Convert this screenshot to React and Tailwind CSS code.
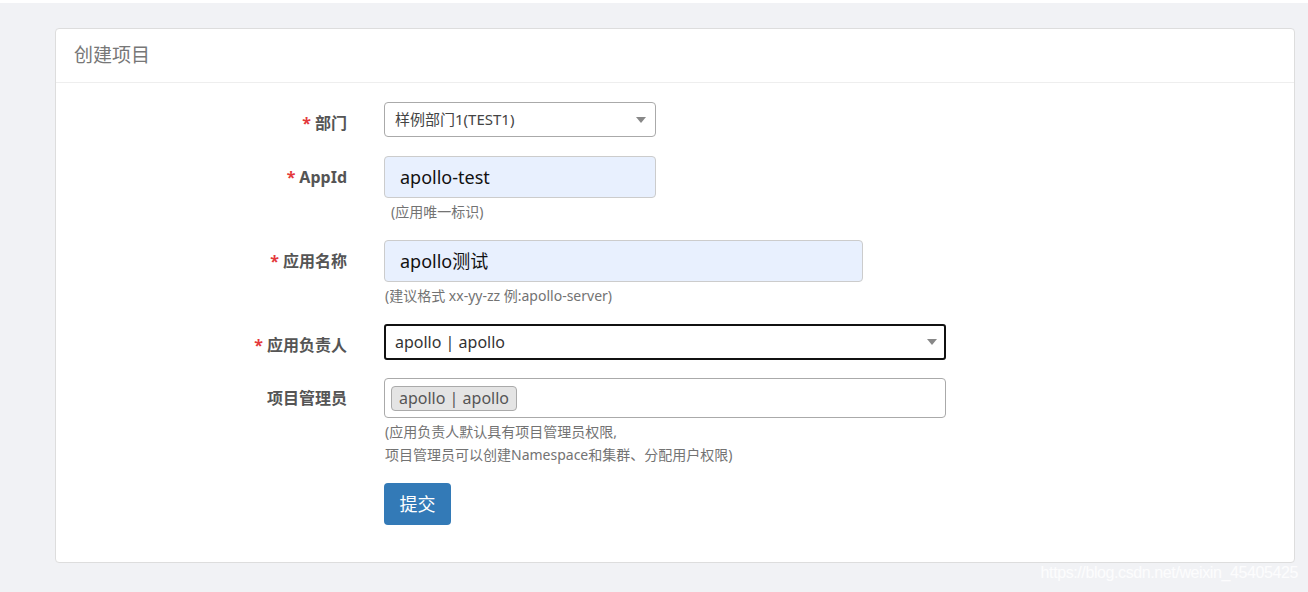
import React from "react";

const font = { fontFamily: '"Noto Sans", "Noto Sans CJK SC", sans-serif' };

function Caret() {
  return (
    <svg width="10" height="6" viewBox="0 0 10 6" className="shrink-0">
      <path d="M0 0 L10 0 L5 6 Z" fill="#888" />
    </svg>
  );
}

function Label({ req, children, className = "" }) {
  return (
    <div className={"w-[291px] shrink-0 text-right pr-0 text-[16px] font-bold text-[#555] " + className}>
      {req && <span className="text-[#e4393c] mr-1">*</span>}
      {children}
    </div>
  );
}

export default function App() {
  return (
    <div className="w-full h-[592px] bg-[#f1f2f5] overflow-hidden relative" style={font}>
      <div className="h-[3px] bg-white" />
      <div className="ml-[55px] mt-[25px] w-[1240px] h-[535px] bg-white border border-[#ddd] rounded-[4px]">
        <div className="h-[54px] border-b border-[#eee] flex items-center pl-[18px] text-[19px] text-[#777]">
          创建项目
        </div>
        <div className="pt-[19px] flex flex-col">
          {/* 部门 */}
          <div className="flex items-center gap-[37px]">
            <Label req className="pt-[6px]">部门</Label>
            <div className="w-[272px] h-[35px] border border-[#aaa] rounded-[4px] flex items-center justify-between pl-[10px] pr-[9px] text-[15px] text-[#444]">
              <span>样例部门1(TEST1)</span>
              <Caret />
            </div>
          </div>
          {/* AppId */}
          <div className="flex items-center gap-[37px] mt-[19px]">
            <Label req>AppId</Label>
            <div className="w-[272px] h-[42px] border border-[#ccc] rounded-[4px] bg-[#e8f0fe] flex items-center pl-[15px] text-[18px] text-[#111]">
              apollo-test
            </div>
          </div>
          <div className="ml-[333px] mt-[4px] text-[14px] text-[#737373] pl-[2px] leading-[19px]">(应用唯一标识)</div>
          {/* 应用名称 */}
          <div className="flex items-center gap-[37px] mt-[19px]">
            <Label req>应用名称</Label>
            <div className="w-[479px] h-[42px] border border-[#ccc] rounded-[4px] bg-[#e8f0fe] flex items-center pl-[15px] text-[18px] text-[#111]">
              apollo测试
            </div>
          </div>
          <div className="ml-[329px] mt-[4px] text-[14px] text-[#737373] leading-[19px]">(建议格式 xx-yy-zz 例:apollo-server)</div>
          {/* 应用负责人 */}
          <div className="flex items-center gap-[37px] mt-[19px]">
            <Label req className="pt-[5px]">应用负责人</Label>
            <div className="w-[562px] h-[36px] border-2 border-[#111] rounded-[3px] flex items-center justify-between pl-[9px] pr-[7px] text-[16px] text-[#333]">
              <span>apollo | apollo</span>
              <Caret />
            </div>
          </div>
          {/* 项目管理员 */}
          <div className="flex items-center gap-[37px] mt-[18px]">
            <Label>项目管理员</Label>
            <div className="w-[562px] h-[40px] border border-[#aaa] rounded-[4px] flex items-center pl-[6px] text-[16px]">
              <span className="h-[25px] px-[7px] flex items-center bg-[#e4e4e4] border border-[#aaa] rounded-[4px] text-[#555]">
                apollo | apollo
              </span>
            </div>
          </div>
          <div className="ml-[329px] mt-[2px] text-[14px] text-[#737373] leading-[23px]">
            <div>(应用负责人默认具有项目管理员权限,</div>
            <div>项目管理员可以创建Namespace和集群、分配用户权限)</div>
          </div>
          {/* submit */}
          <div className="ml-[328px] mt-[17px]">
            <button className="w-[67px] h-[42px] rounded-[4px] bg-[#337ab7] text-white text-[18px]">提交</button>
          </div>
        </div>
      </div>
      <div className="absolute right-[10px] top-[561px] text-[16px] text-white/80 tracking-tight" style={{ fontFamily: '"Liberation Sans", sans-serif' }}>
        https://blog.csdn.net/weixin_45405425
      </div>
    </div>
  );
}
